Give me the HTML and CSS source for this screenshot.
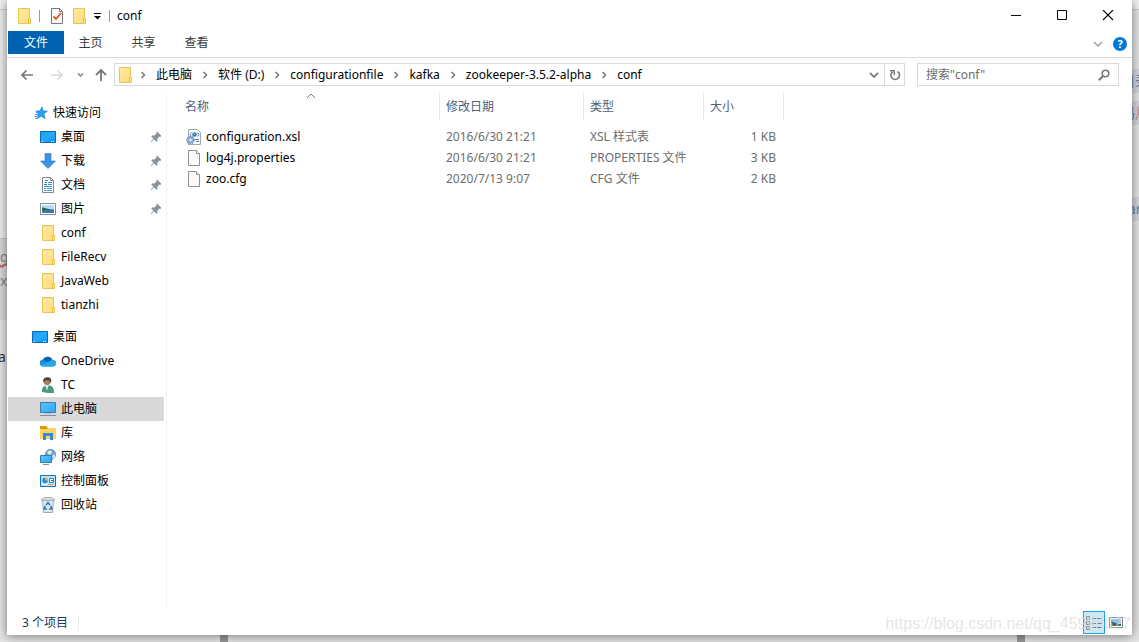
FILE: index.html
```html
<!DOCTYPE html>
<html lang="zh-CN">
<head>
<meta charset="utf-8">
<title>conf</title>
<link rel="stylesheet" href="styles.css">
</head>
<body>
<svg class="defs" aria-hidden="true">
  <defs>
    <linearGradient id="gFolder" x1="0" y1="0" x2="1" y2="1"><stop offset="0" stop-color="#ffe9a2"/><stop offset="1" stop-color="#ffdc7c"/></linearGradient>
    <linearGradient id="gScreen" x1="0" y1="0" x2="1" y2="1"><stop offset="0" stop-color="#1aa0fb"/><stop offset="0.5" stop-color="#27a9ff"/><stop offset="1" stop-color="#0b93f2"/></linearGradient>
    <linearGradient id="gPc" x1="0" y1="0" x2="1" y2="1"><stop offset="0" stop-color="#5cc4ff"/><stop offset="1" stop-color="#2ba5f5"/></linearGradient>
    <symbol id="folder" viewBox="0 0 16 16"><path d="M2.500.500h11v10l-1 1v4h-10z" fill="url(#gFolder)" stroke="#e8c656"/><path d="M12.500 10.500h2v5h-2z" fill="#ffe9a2" stroke="#e8c343"/></symbol>
    <symbol id="desktop" viewBox="0 0 16 16"><path d="M.5 2.500h15v11H.5z" fill="url(#gScreen)" stroke="#0a6cb4"/><path d="M2 12.500h1M11 12.500h1M13 12.500h1" stroke="#d8efff"/></symbol>
    <symbol id="star" viewBox="0 0 16 16"><path d="M10 2l1 4 4.300.2-3.500 2.600 1.200 4.700-3.800-2.500L5.300 13.500 6.700 9 3.800 6.200l4.200-.3z" fill="#2aa0f0" stroke="#1683d3" stroke-width=".8"/><path d="M4 7.500h2M3.500 9.500h2.500M2.500 11.500h3M3 13.500h2" stroke="#3b9fe5"/></symbol>
    <symbol id="download" viewBox="0 0 16 16"><path d="M5 .5h6V8h4.500L8 15.500.500 8H5z" fill="#3f93e6" stroke="#1f78cc" stroke-width=".6"/></symbol>
    <symbol id="document" viewBox="0 0 16 16"><path d="M2.500.500h8l3 3v12h-11z" fill="#fff" stroke="#87898b"/><path d="M10.500.500v3h3" fill="none" stroke="#87898b"/><path d="M5 3.500h3M8 5.500h4M8 7.500h4M4 9.500h8M4 11.500h2M7 11.500h5M4 13.500h2M7 13.500h5" stroke="#2f96cc"/><path d="M4 7.500h3M5 5.500h2" stroke="#1c81bd"/></symbol>
    <symbol id="picture" viewBox="0 0 16 16"><path d="M.500 2.500h15v11H.500z" fill="#fff" stroke="#8a8a8a"/><path d="M2 4h12v5H2z" fill="#b4dbf7"/><path d="M2 6.500c3 0 5 2 12 2V10H2z" fill="#31654f"/><path d="M2 9.500c4-.5 8 .2 12-.5v3H2z" fill="#3979b5"/></symbol>
    <symbol id="cloud" viewBox="0 0 16 16"><path d="M3.500 13.500a3.500 3.500 0 0 1-.5-7A5.200 5.200 0 0 1 12.500 7a3.200 3.200 0 0 1 .3 6.500z" fill="#1490df"/><path d="M3 6.500A5.200 5.200 0 0 1 12.500 7L8 10z" fill="#0364b8"/><path d="M.3 12L12.500 7a3.200 3.200 0 0 1 .3 6.500H3.500A3.500 3.500 0 0 1 .3 12z" fill="#28a8ea"/></symbol>
    <symbol id="user" viewBox="0 0 16 16"><path d="M2 15v-2c0-3 2-4 5-4.500h3c3 1 4 3 4 7.500-4 0-8 0-12-1z" fill="#4a9b7c"/><circle cx="7" cy="4.500" r="3.500" fill="#a87b5a"/><path d="M3.500 5C2 .8 7-.5 9.500.8c2.500 1.200 2 3.500 1.200 5.200L9.500 3.500 6 3z" fill="#4a443e"/><path d="M5.500 8.500l1.500 5 1.500-5z" fill="#f1f3ef"/></symbol>
    <symbol id="pc" viewBox="0 0 16 16"><path d="M.500 1.500h15v10H.500z" fill="url(#gPc)" stroke="#447da5"/><path d="M5 12.500h6" stroke="#aac4d4"/><path d="M0 14.500h16" stroke="#7891a3"/></symbol>
    <symbol id="library" viewBox="0 0 16 16"><path d="M0 1h6l2 2v3H0z" fill="#df9900"/><path d="M0 4h7l1-1h8v11H0z" fill="#ffd364"/><path d="M3 15V8h10v7h-3v-4H6v4z" fill="#2d8be0"/></symbol>
    <symbol id="network" viewBox="0 0 16 16"><circle cx="10.500" cy="5.500" r="5" fill="#71a8c9" stroke="#4f8cac"/><path d="M7 3l4-2 1 3-3 2zM12 7l3-2v3l-2 2z" fill="#d7edf5"/><path d="M.500 6.500h11v7H.500z" fill="url(#gPc)" stroke="#327faf"/><path d="M3 15.500h6" stroke="#7891a3"/></symbol>
    <symbol id="control" viewBox="0 0 16 16"><path d="M.500 2.500h15v11H.500z" fill="#b9e5ff" stroke="#1573af"/><circle cx="5" cy="7.500" r="2.700" fill="#2b87cb"/><path d="M5 7.500v-3a3 3 0 0 1 3 3z" fill="#f9a825"/><path d="M9.500 5.500h4v4h-4z" fill="#fff" stroke="#2683bf"/><path d="M11 7.500h2" stroke="#125f97"/><path d="M2 11.500h5" stroke="#fff"/><path d="M8 11.500h5" stroke="#e99b25"/></symbol>
    <symbol id="bin" viewBox="0 0 16 16"><path d="M2.500 2.500h11l-1 13h-9z" fill="#e5e8ea" stroke="#a4a9ad"/><path d="M1.500 2l3-1.500h7l3 1.500v1.500h-13z" fill="#d2d6d8" stroke="#91989c" stroke-width=".6"/><path d="M6 8l2-2.500L10 8M10.800 9l1 3H9M7 12H4.200l1-3" fill="none" stroke="#1f7fce" stroke-width="1.700"/></symbol>
    <symbol id="pin" viewBox="0 0 12 12"><path d="M7 .5L11.500 5l-1 .8-1-.2-2.200 2.200.1 2-1 .9L4 8.200.8 11.300l-.4-.2L3.300 7.500 1.200 5.400l.9-.9 2.300.1L6.500 2.400l-.2-1z" fill="#87929b"/></symbol>
    <symbol id="file" viewBox="0 0 16 16"><path d="M2.500.500h8l3 3v12h-11z" fill="#fafafa" stroke="#919191"/><path d="M10.500.500v3h3" fill="#fff" stroke="#919191"/></symbol>
    <symbol id="xsl" viewBox="0 0 16 16"><path d="M2.500.500h9l3 3v12h-12z" fill="#fff" stroke="#a0a4ac"/><path d="M5.500 3.500L4 5.500l1.500 2M11.500 3.500L13 5.500l-1.500 2" fill="none" stroke="#4b73b4"/><circle cx="8.500" cy="5.500" r="2.300" fill="#2d7dbd"/><path d="M7 5l2-1v2z" fill="#9ccc65"/><path d="M9 10.500h4M10 12.500h3" stroke="#4674cc"/><circle cx="4.500" cy="11" r="3.500" fill="#8fb1d6" stroke="#6f94bf" stroke-width="1.600" stroke-dasharray="1.500 1"/><circle cx="4.500" cy="11" r="1.300" fill="#e7f0fa"/></symbol>
    <symbol id="check" viewBox="0 0 14 16"><path d="M1.500.500h8l3 3v12h-11z" fill="#fafafa" stroke="#777"/><path d="M9.500.500v3h3" fill="none" stroke="#777"/><path d="M3.500 8.500L6 11l5-6" fill="none" stroke="#e8501e" stroke-width="1.800"/></symbol>
    <symbol id="crumb" viewBox="0 0 8 8"><path d="M1.500 1l3 3-3 3" fill="none" stroke="#777" stroke-width="1.500"/></symbol>
  </defs>
</svg>

<div class="backdrop" aria-hidden="true">
  <div class="page-top"></div>
  <div class="left-strip">
    <div class="strip-sheet"></div>
    <div class="strip-code"><span class="misspelt">g</span><span>x</span></div>
    <span class="strip-letter">a</span>
  </div>
  <div class="right-strip">
    <span class="tag tag-one">目录</span>
    <span class="tag tag-two">码<b>片</b></span>
    <span class="tag tag-three">ar</span>
  </div>
  <i class="bar bar-left"></i><i class="bar bar-right"></i>
</div>

<main class="window">
  <header class="titlebar">
    <svg class="icon"><use href="#folder"/></svg>
    <i class="divider"></i>
    <button class="quick" aria-label="属性"><svg class="icon-check"><use href="#check"/></svg></button>
    <button class="quick" aria-label="新建文件夹"><svg class="icon"><use href="#folder"/></svg></button>
    <button class="quick" aria-label="自定义快速访问工具栏"><svg class="icon-more" viewBox="0 0 8 8"><path d="M0 1.500h7" stroke="#000"/><path d="M0 4h7L3.500 7.500z"/></svg></button>
    <i class="divider"></i>
    <h1>conf</h1>
    <div class="caption-buttons">
      <button aria-label="最小化"><svg viewBox="0 0 12 12"><path d="M1 5.500h10" stroke="#000"/></svg></button>
      <button aria-label="最大化"><svg viewBox="0 0 12 12"><path d="M1.500 .5h9v9h-9z" fill="none" stroke="#000"/></svg></button>
      <button aria-label="关闭"><svg viewBox="0 0 12 12"><path d="M1 0l10 10M11 0L1 10" stroke="#000" stroke-width="1.100"/></svg></button>
    </div>
  </header>

  <nav class="tabs">
    <button class="tab tab-file">文件</button>
    <button class="tab">主页</button>
    <button class="tab">共享</button>
    <button class="tab">查看</button>
    <div class="ribbon-tools">
      <button aria-label="展开功能区"><svg class="icon-chevron" viewBox="0 0 10 10"><path d="M1 3l4 4 4-4" fill="none" stroke="#999" stroke-width="1.300"/></svg></button>
      <button class="help" aria-label="帮助">?</button>
    </div>
  </nav>

  <div class="navigation">
    <div class="arrows">
      <button aria-label="后退"><svg class="icon" viewBox="0 0 16 16"><path d="M14 8H3M7.500 3.500L3 8l4.500 4.500" fill="none" stroke="#777" stroke-width="1.700"/></svg></button>
      <button aria-label="前进"><svg class="icon" viewBox="0 0 16 16"><path d="M2 8h11M8.500 3.500L13 8l-4.500 4.500" fill="none" stroke="#d9d9d9" stroke-width="1.600"/></svg></button>
      <button aria-label="最近的位置"><svg class="icon-small" viewBox="0 0 8 8"><path d="M1 2.500L3.500 5 6 2.500" fill="none" stroke="#808080" stroke-width="1.500"/></svg></button>
      <button aria-label="上移"><svg class="icon" viewBox="0 0 16 16"><path d="M8 14V3M3 8l5-5 5 5" fill="none" stroke="#777" stroke-width="1.800"/></svg></button>
    </div>
    <div class="address">
      <svg class="icon"><use href="#folder"/></svg>
      <ol class="crumbs">
        <li><svg class="icon-small"><use href="#crumb"/></svg><a href="#">此电脑</a></li>
        <li><svg class="icon-small"><use href="#crumb"/></svg><a href="#">软件 (D:)</a></li>
        <li><svg class="icon-small"><use href="#crumb"/></svg><a href="#">configurationfile</a></li>
        <li><svg class="icon-small"><use href="#crumb"/></svg><a href="#">kafka</a></li>
        <li><svg class="icon-small"><use href="#crumb"/></svg><a href="#">zookeeper-3.5.2-alpha</a></li>
        <li><svg class="icon-small"><use href="#crumb"/></svg><a href="#">conf</a></li>
      </ol>
      <button class="history" aria-label="历史记录"><svg class="icon-chevron" viewBox="0 0 10 10"><path d="M1 3l4 4 4-4" fill="none" stroke="#808080" stroke-width="1.800"/></svg></button>
      <button class="refresh" aria-label="刷新"><svg class="icon-refresh" viewBox="0 0 12 12"><path d="M8.500 2.500A4.300 4.300 0 1 1 3.500 2.800" fill="none" stroke="#777" stroke-width="1.600"/><path d="M1 1.700h4.200V6" fill="none" stroke="#777" stroke-width="1.400"/></svg></button>
    </div>
    <label class="search">
      <input type="text" placeholder="搜索&quot;conf&quot;" aria-label="搜索">
      <svg class="icon-search" viewBox="0 0 12 12"><circle cx="7.500" cy="4.500" r="3.300" fill="none" stroke="#777" stroke-width="1.600"/><path d="M5 7L.8 11.200" stroke="#777" stroke-width="2"/></svg>
    </label>
  </div>

  <div class="content">
    <nav class="sidebar">
      <ul>
        <li class="root"><svg class="icon"><use href="#star"/></svg><a href="#">快速访问</a></li>
        <li><svg class="icon"><use href="#desktop"/></svg><a href="#">桌面</a><svg class="pin"><use href="#pin"/></svg></li>
        <li><svg class="icon"><use href="#download"/></svg><a href="#">下载</a><svg class="pin"><use href="#pin"/></svg></li>
        <li><svg class="icon"><use href="#document"/></svg><a href="#">文档</a><svg class="pin"><use href="#pin"/></svg></li>
        <li><svg class="icon"><use href="#picture"/></svg><a href="#">图片</a><svg class="pin"><use href="#pin"/></svg></li>
        <li><svg class="icon"><use href="#folder"/></svg><a href="#">conf</a></li>
        <li><svg class="icon"><use href="#folder"/></svg><a href="#">FileRecv</a></li>
        <li><svg class="icon"><use href="#folder"/></svg><a href="#">JavaWeb</a></li>
        <li><svg class="icon"><use href="#folder"/></svg><a href="#">tianzhi</a></li>
      </ul>
      <ul>
        <li class="root"><svg class="icon"><use href="#desktop"/></svg><a href="#">桌面</a></li>
        <li><svg class="icon"><use href="#cloud"/></svg><a href="#">OneDrive</a></li>
        <li><svg class="icon"><use href="#user"/></svg><a href="#">TC</a></li>
        <li class="selected"><svg class="icon"><use href="#pc"/></svg><a href="#">此电脑</a></li>
        <li><svg class="icon"><use href="#library"/></svg><a href="#">库</a></li>
        <li><svg class="icon"><use href="#network"/></svg><a href="#">网络</a></li>
        <li><svg class="icon"><use href="#control"/></svg><a href="#">控制面板</a></li>
        <li><svg class="icon"><use href="#bin"/></svg><a href="#">回收站</a></li>
      </ul>
    </nav>
    <section class="files">
      <table>
        <thead>
          <tr>
            <th class="col-name">名称<svg class="sort" viewBox="0 0 10 6"><path d="M1 5l4-4 4 4" fill="none" stroke="#777"/></svg></th>
            <th class="col-date">修改日期</th>
            <th class="col-type">类型</th>
            <th class="col-size">大小</th>
          </tr>
        </thead>
        <tbody>
          <tr><td><span class="file"><svg class="icon"><use href="#xsl"/></svg>configuration.xsl</span></td><td>2016/6/30 21:21</td><td>XSL 样式表</td><td class="size">1 KB</td></tr>
          <tr><td><span class="file"><svg class="icon"><use href="#file"/></svg>log4j.properties</span></td><td>2016/6/30 21:21</td><td>PROPERTIES 文件</td><td class="size">3 KB</td></tr>
          <tr><td><span class="file"><svg class="icon"><use href="#file"/></svg>zoo.cfg</span></td><td>2020/7/13 9:07</td><td>CFG 文件</td><td class="size">2 KB</td></tr>
        </tbody>
      </table>
    </section>
  </div>

  <footer class="status">
    <span class="count">3 个项目</span>
    <div class="views">
      <button class="view active" aria-label="详细信息"><svg viewBox="0 0 16 14"><path d="M.500.500h3v3h-3zM.500 5.500h3v3h-3zM.500 10.500h3v3h-3z" fill="#fff" stroke="#8c8c8c"/><path d="M1.500 7h1M1.500 2h1" stroke="#4a7"/><path d="M1.500 12h1" stroke="#e33"/><path d="M6 2.500h4M11 2.500h5M6 7.500h4M11 7.500h5M6 11.500h4M11 11.500h5" stroke="#777"/></svg></button>
      <button class="view" aria-label="大图标"><svg viewBox="0 0 14 12"><path d="M.500.500h13v10H.500z" fill="#fff" stroke="#888"/><path d="M2 2h10v4H2z" fill="#8fc2ee"/><path d="M2 4.500c3 0 4 3 10 2V9H2z" fill="#31654f"/><path d="M6 8.500h6" stroke="#3979b5"/></svg></button>
    </div>
  </footer>
</main>
<div class="watermark">https://blog.csdn.net/qq_45994627</div>
</body>
</html>
```
FILE: styles.css
```css
* { box-sizing: border-box; }
body {
  margin: 0;
  padding: 0 7px 7px;
  min-height: 100vh;
  display: flex;
  position: relative;
  overflow: hidden;
  background: #e6e6e6;
  color: #000;
  font: 12px/16px "Noto Sans", "Noto Sans CJK SC", sans-serif;
}
button { border: 0; padding: 0; background: none; font: inherit; color: inherit; display: flex; align-items: center; justify-content: center; }
a { color: inherit; text-decoration: none; }
ul, ol { list-style: none; margin: 0; padding: 0; }
svg { flex: none; display: block; }
.defs { position: absolute; width: 0; height: 0; }
.icon { width: 16px; height: 16px; }
.icon-small { width: 8px; height: 8px; }
.icon-chevron { width: 10px; height: 10px; }

.backdrop { position: absolute; inset: 0; overflow: hidden; color: #888; font-size: 14px; }
.page-top { height: 10px; background: #f2f2f2; border-bottom: 1px solid #d0d0d0; }
.left-strip, .right-strip { position: absolute; top: 0; bottom: 0; width: 7px; }
.left-strip { left: 0; }
.right-strip { right: 0; }
.strip-sheet { position: absolute; top: 10px; left: 0; width: 7px; height: 229px; background: #ededed; border-bottom: 1px solid #c4c4c4; }
.strip-code { position: absolute; top: 239px; left: 0; width: 7px; height: 81px; padding-top: 6px; background: #d9d9d9; line-height: 24px; display: grid; align-content: start; }
.misspelt { text-decoration: underline wavy #d44; text-decoration-skip-ink: none; }
.strip-letter { position: absolute; top: 349px; left: -2px; color: #333; }
.tag { position: absolute; width: 28px; height: 24px; background: #d3d6dc; color: #777da0; line-height: 24px; white-space: nowrap; }
.tag b { color: #d8927c; font-weight: normal; }
.tag-one { top: 69px; left: -11px; }
.tag-two { top: 101px; left: -11px; }
.tag-three { top: 197px; left: -4px; }
.bar { position: absolute; bottom: 0; width: 8px; height: 7px; background: #979797; }
.bar-left { left: 220px; }
.bar-right { right: 114px; }

.window { position: relative; flex: 1; min-width: 0; display: flex; flex-direction: column; background: #fff; box-shadow: 0 1px 10px rgba(0, 0, 0, .5); }

.titlebar { display: flex; align-items: center; height: 31px; padding-left: 9px; }
.titlebar h1 { margin: 0 0 0 7px; font-size: 12px; font-weight: normal; }
.divider { width: 1px; height: 12px; margin: 0 7px; background: #999; }
.titlebar .divider:last-of-type { margin-right: 0; }
.quick { margin-right: 7px; }
.icon-check { width: 14px; height: 16px; margin-left: 3px; }
.icon-more { width: 8px; height: 8px; }
.quick:last-of-type { margin: 0; }
.caption-buttons { margin-left: auto; display: flex; align-self: stretch; padding-right: 1px; }
.caption-buttons button { width: 46px; }
.caption-buttons svg { width: 12px; height: 12px; }

.tabs { display: flex; align-items: flex-start; height: 27px; padding-left: 1px; border-bottom: 1px solid #dadbdc; }
.tab { height: 24px; width: 53px; color: #3b3b3b; }
.tab-file { height: 23px; width: 56px; background: #0063b1; color: #fff; }
.ribbon-tools { margin-left: auto; display: flex; align-items: center; gap: 10px; height: 26px; padding-right: 5px; }
.help { width: 14px; height: 14px; border-radius: 50%; background: #0078d7; color: #fff; font-weight: bold; font-size: 11px; }

.navigation { display: flex; align-items: center; height: 33px; padding: 0 13px 0 12px; }
.arrows { display: flex; align-items: center; width: 95px; gap: 14px; }
.arrows button:nth-child(3) { margin: 0 -6px 0 -2px; }
.address { flex: 1; min-width: 0; display: flex; align-items: center; height: 23px; margin-right: 12px; padding-left: 2px; border: 1px solid #d9d9d9; }
.crumbs { flex: 1; min-width: 0; display: flex; gap: 3px; overflow: hidden; white-space: nowrap; }
.crumbs li { display: flex; align-items: center; }
.crumbs svg { margin: 0 8px 0 7px; }
.history { width: 20px; align-self: stretch; }
.refresh { width: 20px; align-self: stretch; border-left: 1px solid #d9d9d9; }
.icon-refresh { width: 12px; height: 12px; }
.search { display: flex; align-items: center; width: 202px; height: 23px; padding: 0 8px; border: 1px solid #d9d9d9; }
.search input { flex: 1; min-width: 0; border: 0; padding: 0; outline: 0; background: none; font: inherit; }
.search input::placeholder { color: #6d6d6d; opacity: 1; }
.icon-search { width: 12px; height: 12px; }

.content { flex: 1; display: flex; padding-top: 1px; }
.sidebar { width: 160px; margin-top: 1px; padding: 8px 2px 0 1px; border-right: 1px solid #f3f3f3; }
.sidebar ul + ul { margin-top: 8px; }
.sidebar li { display: flex; align-items: center; gap: 5px; height: 24px; padding: 0 2px 0 32px; }
.sidebar li.root { padding-left: 24px; }
.sidebar li.selected { background: #d9d9d9; }
.pin { width: 12px; height: 12px; margin-left: auto; }

.files { flex: 1; min-width: 0; padding-top: 1px; }
table { border-collapse: separate; border-spacing: 0; table-layout: fixed; width: 617px; }
th { position: relative; height: 27px; padding: 0 6px; text-align: left; font-weight: normal; color: #4c607a; border-right: 1px solid #e5e5e5; }
th:first-child { padding-left: 18px; }
.col-name { width: 273px; }
.col-date { width: 144px; }
.col-type { width: 120px; }
.col-size { width: 80px; }
.sort { position: absolute; top: 0; left: 51%; width: 10px; height: 6px; }
tbody::before { content: ""; display: block; height: 6px; }
td { height: 21px; padding: 0 6px; color: #6d6d6d; }
td:first-child { padding-left: 19px; }
.file { display: flex; align-items: center; gap: 4px; color: #000; }
.size { text-align: right; padding-right: 8px; }

.status { display: flex; align-items: center; height: 25px; padding: 0 5px 0 15px; color: #1e395b; }
.count { padding-right: 10px; border-right: 1px solid #ececec; }
.views { margin-left: auto; display: flex; }
.view { width: 22px; height: 23px; border: 1px solid transparent; }
.view.active { background: #cce8f6; border-color: #26a0da; }
.view svg { width: 14px; height: 12px; }
.view.active svg { width: 16px; height: 14px; }
.watermark { position: absolute; right: 8px; bottom: 8px; color: rgba(215, 215, 215, .65); font: 16px/20px "Liberation Sans", Arial, sans-serif; pointer-events: none; }
```
